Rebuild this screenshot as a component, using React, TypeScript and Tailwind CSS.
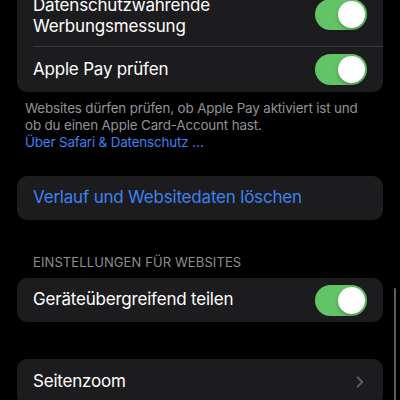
import { ChevronRight } from "lucide-react";

function Toggle() {
  return (
    <div className="flex items-center w-[52px] h-[31px] rounded-full bg-[#63c466] p-[2px] justify-end shrink-0">
      <div className="w-[27px] h-[27px] rounded-full bg-white shadow-[0_2px_4px_rgba(0,0,0,0.25)]" />
    </div>
  );
}

export default function App() {
  return (
    <div
      className="w-[400px] h-[400px] overflow-hidden bg-black relative"
      style={{ fontFamily: "Inter, 'Noto Sans', sans-serif" }}
    >
      <div className="flex flex-col -mt-[18px] px-[17px]">
        <div className="rounded-[10px] bg-[#1c1c1e]">
          <div className="flex items-center justify-between h-[64px] px-[16px]">
            <div className="pt-[3px] text-[17px] leading-[21px] text-white tracking-[-0.2px]">
              Datenschutzwahrende
              <br />
              Werbungsmessung
            </div>
            <Toggle />
          </div>
          <div className="ml-[16px] h-px bg-[#38383a]" />
          <div className="flex items-center justify-between h-[45px] px-[16px]">
            <div className="text-[17px] text-white tracking-[-0.2px]">
              Apple Pay prüfen
            </div>
            <Toggle />
          </div>
        </div>

        <div className="pl-[8px] pt-[8px] text-[13.4px] leading-[17px] text-[#939398] tracking-[-0.15px]">
          <div>Websites dürfen prüfen, ob Apple Pay aktiviert ist und</div>
          <div>ob du einen Apple Card-Account hast.</div>
          <div className="text-[#3d82f4]">Über Safari &amp; Datenschutz …</div>
        </div>

        <div className="mt-[25px] rounded-[10px] bg-[#1c1c1e] h-[44px] flex items-center pl-[16px]">
          <div className="text-[17px] text-[#3d82f4] tracking-[-0.2px]">
            Verlauf und Websitedaten löschen
          </div>
        </div>

        <div className="mt-[34px] pl-[16px] text-[13px] leading-[16px] text-[#8d8d93] tracking-[0.1px]">
          EINSTELLUNGEN FÜR WEBSITES
        </div>

        <div className="mt-[8px] rounded-[10px] bg-[#1c1c1e] h-[44px] flex items-center justify-between px-[16px]">
          <div className="text-[17px] text-white tracking-[-0.2px]">
            Geräteübergreifend teilen
          </div>
          <Toggle />
        </div>

        <div className="mt-[37px] rounded-[10px] bg-[#1c1c1e] h-[46px] flex items-center justify-between pl-[16px] pr-[14px]">
          <div className="text-[17px] text-white tracking-[-0.2px]">
            Seitenzoom
          </div>
          <ChevronRight className="w-[18px] h-[18px] text-[#5b5b60]" strokeWidth={2.5} />
        </div>
      </div>

      <div className="absolute right-[4px] top-[288px] w-[2.5px] h-[120px] rounded-full bg-[#5c5c5e]" />
    </div>
  );
}
